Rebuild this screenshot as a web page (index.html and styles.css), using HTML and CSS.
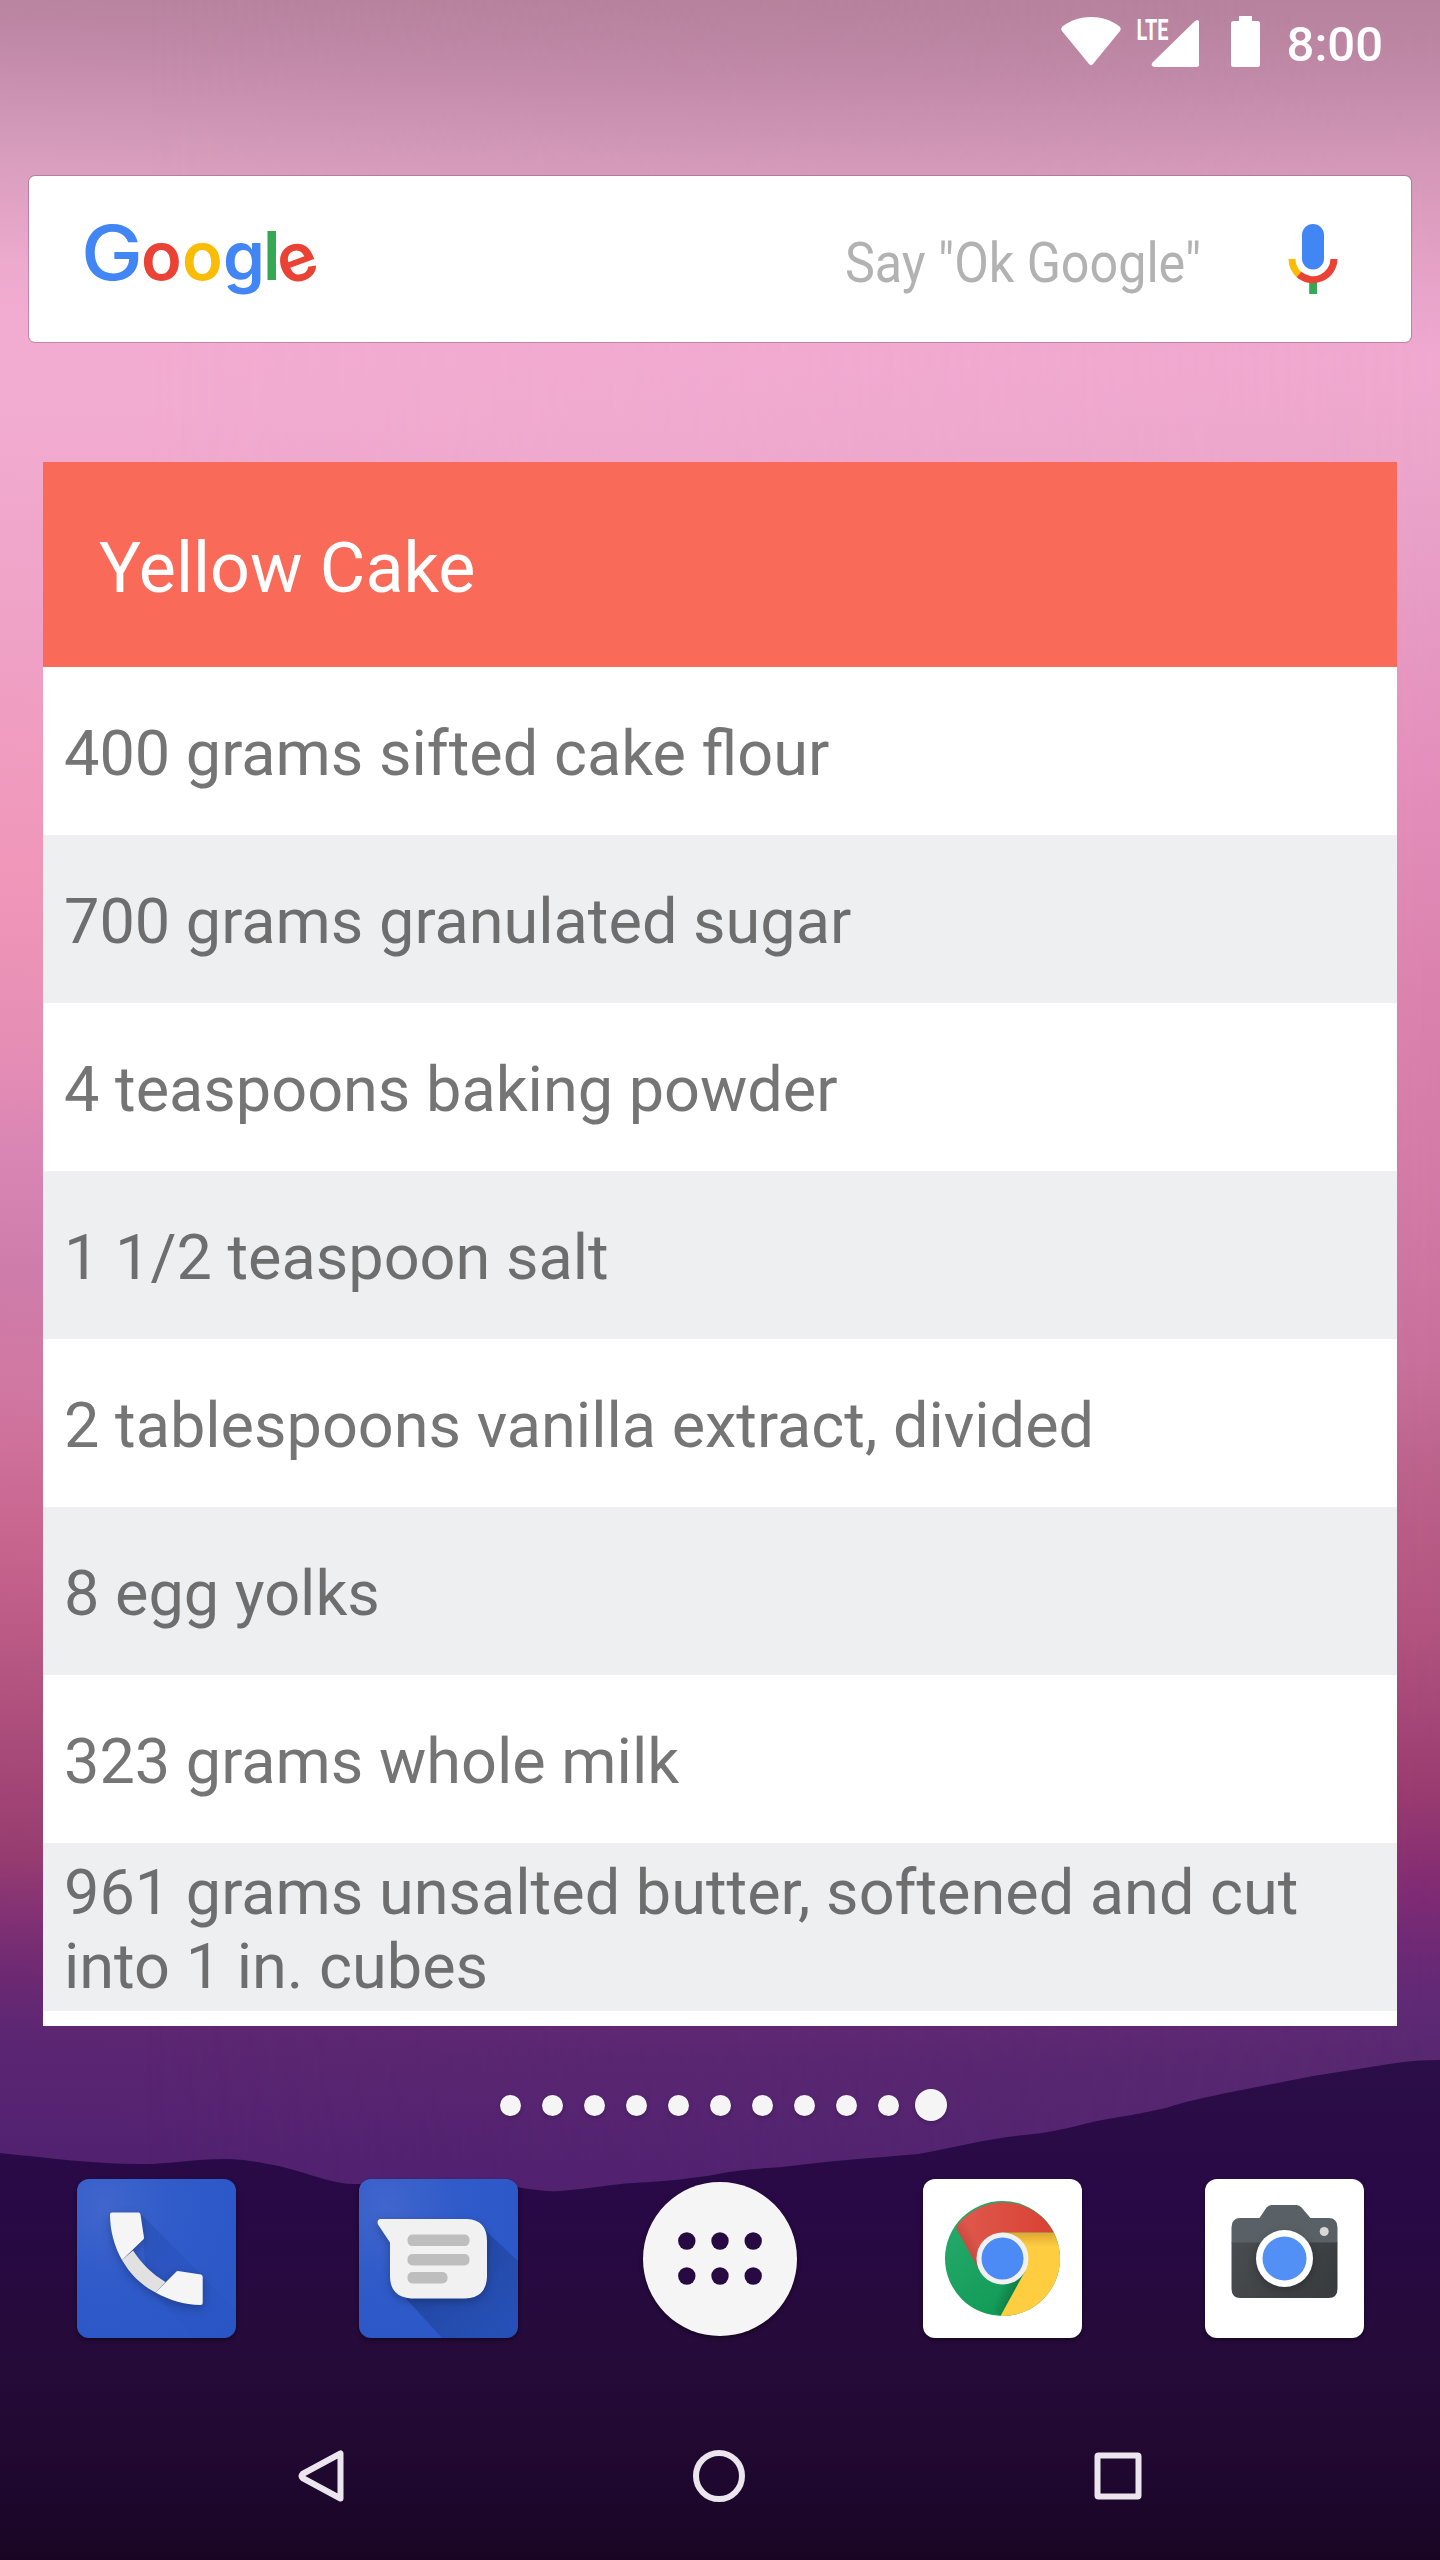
FILE: index.html
```html
<!DOCTYPE html>
<html lang="en">
<head>
<meta charset="utf-8">
<title>Home screen</title>
<link rel="stylesheet" href="styles.css">
</head>
<body>
<div class="screen">
  <div class="wallpaper">
    <div class="sky sky-right"></div>
    <svg class="hills" width="1440" height="540" viewBox="0 2020 1440 540">
      <defs>
        <linearGradient id="hill" x1="0" y1="2060" x2="0" y2="2560" gradientUnits="userSpaceOnUse">
          <stop offset="0" stop-color="#2b0d48"/><stop offset=".3" stop-color="#280945"/><stop offset=".62" stop-color="#250b38"/><stop offset=".86" stop-color="#1e072e"/><stop offset="1" stop-color="#190523"/>
        </linearGradient>
      </defs>
      <path fill="url(#hill)" d="M0 2153C50 2158 95 2164 139 2164C175 2164 200 2158 229 2159C250 2160 262 2163 279 2166C300 2171 312 2176 332 2181C345 2184 350 2184 359 2184L516 2187Q545 2192 560 2191C590 2189 610 2184 634 2183C670 2181 685 2179 707 2176C730 2171 750 2169 781 2167C830 2161 870 2158 918 2154C960 2146 990 2138 1029 2134.5C1060 2132 1090 2121 1116 2117.5C1140 2114 1150 2111 1166 2108C1190 2100 1205 2098 1221 2094L1313 2076L1396 2063Q1415 2060 1440 2060V2560H0Z"/>
    </svg>
  </div>

  <header class="status">
    <svg width="146" height="56" viewBox="1058 14 146 56" fill="#fff">
      <path d="M1062.200 31.300Q1060 28.600 1062.800 26.200C1071 20 1081 17 1091 17S1111 20 1119.200 26.200Q1122 28.600 1119.800 31.300L1093 64Q1091 66.300 1089 64Z"/>
      <path d="M1194.500 21.500Q1199 18 1199 22.500V64.500Q1199 67 1196.500 67H1154.500Q1150 66 1152.500 62.500Z"/>
      <text class="lte" x="1136.500" y="39.500" textLength="32" lengthAdjust="spacingAndGlyphs">LTE</text>
    </svg>
    <svg class="battery" width="29" height="51" viewBox="0 0 29 51" fill="#fff"><path d="M8 0H21V5H26.500Q29 5 29 7.500V48.500Q29 51 26.500 51H2.500Q0 51 0 48.500V7.500Q0 5 2.500 5H8Z"/></svg>
    <span class="clock">8:00</span>
  </header>

  <section class="search">
    <svg class="logo" width="240" height="110" viewBox="80 204 240 110">
      <g class="logo-text">
        <text class="big" x="81" y="280" textLength="62" lengthAdjust="spacingAndGlyphs" fill="#4285f4">G</text>
        <text y="280"><tspan x="141" fill="#ea4335">o</tspan><tspan x="182" fill="#fbbc05">o</tspan><tspan x="223" fill="#4285f4">g</tspan><tspan x="263" fill="#34a853">l</tspan></text>
        <text x="-20.500" y="18.500" transform="translate(298 262) rotate(-20)" fill="#ea4335">e</text>
      </g>
    </svg>
    <svg class="hint" width="370" height="70" viewBox="840 225 370 70">
      <text x="845" y="281" textLength="356" lengthAdjust="spacingAndGlyphs">Say "Ok Google"</text>
    </svg>
    <svg width="50" height="72" viewBox="1288 223 50 72">
      <rect x="1302" y="224" width="22" height="45.500" rx="11" fill="#4285f4"/>
      <path d="M1309.200 282H1317V294H1309.200Z" fill="#34a853"/>
      <g fill="none" stroke-width="7"><path d="M1292 259A21 21 0 0 0 1299.500 275" stroke="#fbbc05"/><path d="M1299 274.500A21.100 21.100 0 0 0 1334 259" stroke="#ea4335"/></g>
    </svg>
  </section>

  <main class="widget">
    <h1 class="title">Yellow Cake</h1>
    <ul class="list">
      <li>400 grams sifted cake flour</li>
      <li>700 grams granulated sugar</li>
      <li>4 teaspoons baking powder</li>
      <li>1 1/2 teaspoon salt</li>
      <li>2 tablespoons vanilla extract, divided</li>
      <li>8 egg yolks</li>
      <li>323 grams whole milk</li>
      <li>961 grams unsalted butter, softened and cut into 1 in. cubes</li>
    </ul>
  </main>

  <div class="pages"><i></i><i></i><i></i><i></i><i></i><i></i><i></i><i></i><i></i><i></i><i class="current"></i></div>

  <nav class="dock">
    <div class="app blue">
      <svg width="159" height="159" viewBox="0 0 159 159">
        <defs><linearGradient id="ls" x1="60" y1="50" x2="140" y2="140" gradientUnits="userSpaceOnUse"><stop stop-color="#1c3f9c" stop-opacity=".3"/><stop offset="1" stop-color="#1c3f9c" stop-opacity=".05"/></linearGradient></defs>
        <path fill="url(#ls)" d="M64 35L159 131V147Q159 159 147 159H118L70 108Z"/>
        <g class="lift"><path fill="#e1e1e1" d="M56 71.500C64 84 75 95 88.500 103L78.500 113.500C64 106 53 95 45 81Z"/>
        <path fill="#f5f5f5" d="M35 33.500H61.500Q63 33.500 63.400 35L67 58.500Q67 59.500 66.500 60.300L45 81C37 67 33 51 33 35.500Q33 33.500 35 33.500ZM101 92L124 95.500Q125.700 96 125.700 98V124Q125.700 126 123.500 126C107 126 92 121 78.500 113.500L99.500 92.500Q100 91.900 101 92Z"/></g>
      </svg>
    </div>
    <div class="app blue">
      <svg width="159" height="159" viewBox="0 0 159 159">
        <defs><linearGradient id="ms" x1="80" y1="80" x2="159" y2="159" gradientUnits="userSpaceOnUse"><stop stop-color="#1b3c8c" stop-opacity=".65"/><stop offset="1" stop-color="#234aa8" stop-opacity=".45"/></linearGradient></defs>
        <path fill="url(#ms)" d="M125 50L159 82V147Q159 159 147 159H83L40 112Z"/>
        <path class="lift" fill="#f1f1f1" d="M21 40H108Q128 41 128 62V98Q127 119 106 119.500H52Q31.500 118 31 98V63.500L19 45.500Q17.500 40.500 21 40Z"/>
        <g fill="#bebebe"><rect x="48.500" y="55.600" width="62" height="11.500" rx="5"/><rect x="48.500" y="75" width="62" height="11.500" rx="5"/><rect x="48.500" y="93" width="40" height="11.500" rx="5"/></g>
      </svg>
    </div>
    <div class="app drawer">
      <svg width="154" height="154" viewBox="-77 -77 154 154" fill="#280a42"><g id="row"><circle cx="-33.200" cy="-18" r="8.700"/><circle cy="-18" r="8.700"/><circle cx="33.200" cy="-18" r="8.700"/></g><use href="#row" y="35"/></svg>
    </div>
    <div class="app">
      <svg width="159" height="159" viewBox="-79.500 -79.500 159 159">
        <defs>
          <linearGradient id="cr" x1="-30" y1="0" x2="40" y2="0" gradientUnits="userSpaceOnUse"><stop stop-color="#de5549"/><stop offset="1" stop-color="#da4437"/></linearGradient>
          <linearGradient id="cg" x1="-50" y1="-20" x2="0" y2="50" gradientUnits="userSpaceOnUse"><stop stop-color="#23a768"/><stop offset="1" stop-color="#129b57"/></linearGradient>
          <linearGradient id="cy" x1="0" y1="-26" x2="0" y2="-12" gradientUnits="userSpaceOnUse"><stop stop-color="#dfa635"/><stop offset="1" stop-color="#fecd40"/></linearGradient>
          <linearGradient id="rsh" x1="-44" y1="-5" x2="-25" y2="-16" gradientUnits="userSpaceOnUse"><stop stop-color="#8c2a22" stop-opacity=".45"/><stop offset="1" stop-color="#8c2a22" stop-opacity="0"/></linearGradient>
          <linearGradient id="gsh" x1="14" y1="34" x2="-2" y2="28" gradientUnits="userSpaceOnUse"><stop stop-color="#0b5c35" stop-opacity=".55"/><stop offset="1" stop-color="#0b5c35" stop-opacity="0"/></linearGradient>
        </defs>
        <circle r="57.500" fill="url(#cg)"/>
        <path fill="url(#gsh)" d="M22 13L-2 57.500L-20 40L0 20Z"/>
        <path fill="url(#cr)" d="M-46.600-31A57.500 57.500 0 0 1 51.400-26H0L-22.500 13Z"/>
        <path fill="url(#rsh)" d="M-46.600-31L-22.500 13L-15-20L-38-40Z"/>
        <path fill="url(#cy)" d="M0-26H51.400A57.500 57.500 0 0 1-2 57.500L22.500 13Z"/>
        <circle r="26" fill="#f1f1f1"/><circle r="21" fill="#4c8bf5"/>
      </svg>
    </div>
    <div class="app">
      <svg width="159" height="159" viewBox="-79.500 -79.500 159 159">
        <defs><linearGradient id="cam" x1="-50" y1="-20" x2="40" y2="40" gradientUnits="userSpaceOnUse"><stop stop-color="#4a4d50"/><stop offset="1" stop-color="#393c3f"/></linearGradient></defs>
        <path fill="url(#cam)" d="M-53-16.500H53V30Q53 39.500 44 39.500H-44Q-53 39.500-53 30Z"/>
        <path fill="#596066" d="M-53-16V-31Q-53-40.500-44-40.500H-25L-18-51Q-16-53.500-13-53.500H12Q15-53.500 17-51L26-40.500H44Q53-40.500 53-31V-16Z"/>
        <circle class="lift" r="28.500" fill="#fff"/><circle r="22" fill="#5290f5"/><circle cx="39.700" cy="-27" r="4.500" fill="#d8d8d8"/>
      </svg>
    </div>
  </nav>

  <footer class="nav">
    <svg width="48" height="56" viewBox="-24 -28 48 56"><path d="M18.500-22.500V22.500L-19.500 2Q-21.500 0-19.500-2Z"/></svg>
    <svg width="56" height="56" viewBox="-28 -28 56 56"><circle r="23"/></svg>
    <svg width="52" height="56" viewBox="-26 -28 52 56"><rect x="-20.500" y="-20.500" width="41" height="41" rx="1"/></svg>
  </footer>
</div>
</body>
</html>
```
FILE: styles.css
```css
* { box-sizing: border-box; }
body { margin: 0; font-family: Roboto, "Liberation Sans", sans-serif; }
.screen { position: relative; isolation: isolate; width: 1440px; height: 2560px; overflow: hidden; display: flex; flex-direction: column; }

.wallpaper {
  position: absolute; inset: 0; z-index: -1;
  background: linear-gradient(182deg, #b6829d 30px, #c089a7 90px, #d49ab9 185px, #ecaacd 310px, #f3acd1 370px, #f2acd1 450px, #efa3c7 650px, #f096b9 930px, #e78eb5 1090px, #d986b4 1200px, #ce7dab 1320px, #d178a2 1430px, #c96690 1580px, #b95984 1690px, #a84a79 1800px, #983d70 1900px, #803074 1970px, #6e2a72 2020px, #5c2673 2080px, #522270 2200px);
}
.sky-right {
  position: absolute; inset: 0;
  background: linear-gradient(180deg, #b6829d 0, #c089a7 70px, #d397b7 160px, #e8a4c9 290px, #f0a8cf 360px, #eca6cb 440px, #e79dc5 580px, #e48fbc 765px, #db83ae 980px, #d279a5 1200px, #c8709b 1360px, #bb628b 1470px, #b1537e 1630px, #993b70 1795px, #832c73 1880px, #6a2975 1958px, #602976 2000px, #572870 2060px, #522270 2200px);
  -webkit-mask-image: linear-gradient(90deg, transparent 10%, #000 100%);
  mask-image: linear-gradient(90deg, transparent 10%, #000 100%);
}
.hills { position: absolute; left: 0; bottom: 0; display: block; }

.status { height: 176px; padding: 14px 57px 0 0; display: flex; justify-content: flex-end; align-items: flex-start; color: #fff; }
.status svg { overflow: visible; }
.lte { font-size: 30px; font-weight: 700; }
.battery { margin: 2px 0 0 27px; }
.clock { margin-left: 27px; padding-top: 2px; font-size: 49px; font-weight: 500; line-height: 58px; }

.search { height: 166px; margin: 0 29px; padding: 0 73px 0 51px; display: flex; align-items: center; background: #fff; border-radius: 6px; box-shadow: 0 0 0 1px rgba(90, 50, 80, .3); }
.logo { overflow: visible; }
.logo-text { font: 600 67px Inter, sans-serif; }
.logo-text .big { font-size: 75px; font-weight: 500; }
.hint { margin: 3px 78px 0 auto; font-size: 56px; fill: #b2b2b2; }

.widget { height: 1564px; margin: 120px 43px 0; background: #fff; }
.title { height: 205px; margin: 0; padding: 6px 56px 0; display: flex; align-items: center; background: #f96a59; color: #fff; font-size: 70px; font-weight: 400; }
.list { margin: 0; padding: 0; list-style: none; }
.list li { height: 168px; padding: 5px 21px 0; display: flex; align-items: center; color: #757575; font-size: 63px; line-height: 74px; }
.list li:nth-child(even) { background: #eeeff1; color: #6e6e6e; }

.pages { height: 153px; padding: 5px 0 0 6px; display: flex; justify-content: center; align-items: center; gap: 21px; }
.pages i { width: 21px; height: 21px; border-radius: 50%; background: #f5f5f5; box-shadow: 0 2px 4px rgba(0, 0, 0, .2); }
.pages .current { width: 32px; height: 32px; margin-left: -5px; }

.dock { height: 159px; padding: 0 76.500px; display: flex; justify-content: space-between; align-items: center; }
.app { width: 159px; height: 159px; border-radius: 12px; background: #fff; box-shadow: 0 2px 4px rgba(0, 0, 0, .45); }
.app svg { display: block; }
.blue { background: radial-gradient(circle at 27px 27px, #4166cc 0, #305bc9 70px, #2a57c7 180px); }
.drawer { width: 154px; height: 154px; margin: 0 2.500px; border-radius: 50%; background: #f5f5f5; }
.lift { filter: drop-shadow(0 3px 4px rgba(0, 0, 0, .25)); }

.nav { flex: 1; padding: 110px 296px 0 298px; display: flex; justify-content: space-between; align-items: flex-start; }
.nav svg { fill: none; stroke: #ebe6ed; stroke-width: 6; stroke-linejoin: round; }
```
